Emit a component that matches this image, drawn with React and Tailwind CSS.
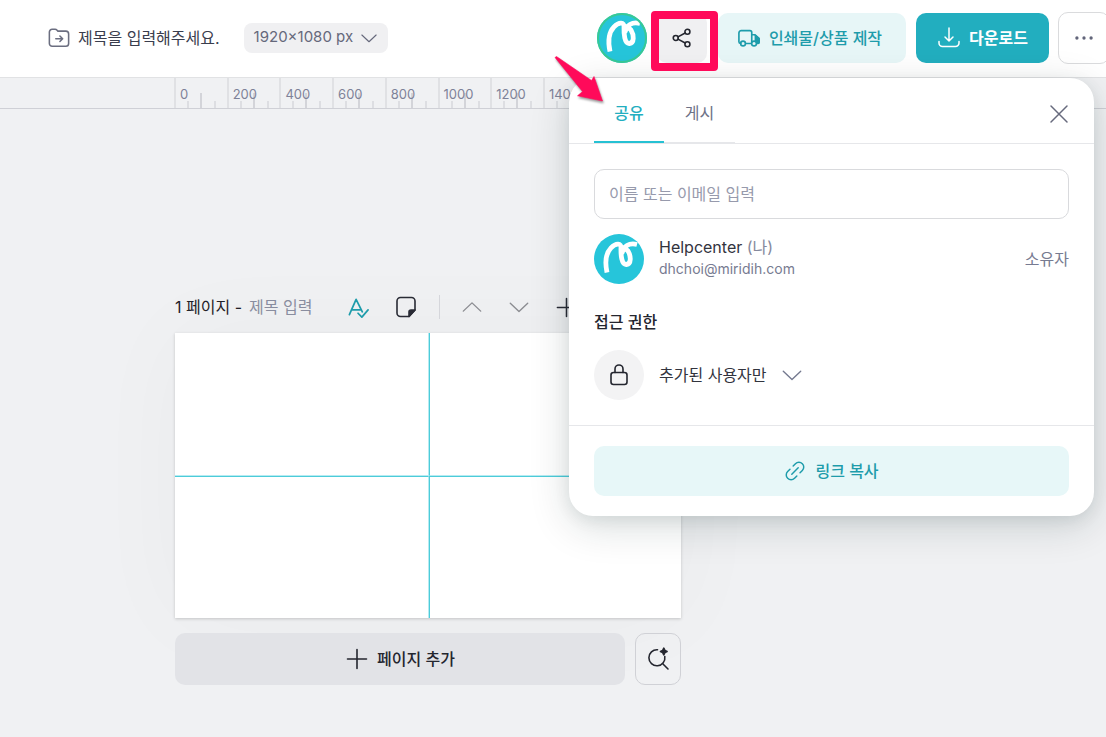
import React from "react";

const RULER = [0, 200, 400, 600, 800, 1000, 1200, 1400, 1600, 1800];

const line = {
  fill: "none",
  stroke: "currentColor",
  strokeWidth: 1.5,
  strokeLinecap: "round",
  strokeLinejoin: "round",
};

function Svg({ className, children, ...rest }) {
  return (
    <svg viewBox="0 0 24 24" aria-hidden="true" className={className} {...line} {...rest}>
      {children}
    </svg>
  );
}

function Squiggle({ className }) {
  return (
    <svg viewBox="0 0 50 50" aria-hidden="true" className={className}>
      <circle cx="25" cy="25" r="25" fill="#26c5da" />
      <path
        d="M13 38.500C11 29 11.500 19.500 17 13.800C22 8.500 27.500 9 27 14C26.800 21 27.500 31 32.500 30.500C37.500 30 37 22 34 17C31.800 14 29.300 15 28.200 18.500C29 12.500 35 8.500 43 10.500"
        fill="none"
        stroke="#fff"
        strokeWidth="4.800"
        strokeLinejoin="round"
      />
    </svg>
  );
}

function Chevron({ className, up }) {
  return (
    <Svg className={className} strokeWidth="1.500">
      <path d={up ? "M2.500 16.500 12 7.500l9.500 9" : "M2.500 8l9.500 9 9.500-9"} />
    </Svg>
  );
}

function Header() {
  return (
    <header className="flex h-[78px] items-center border-b border-[#e1e2e4] bg-white pb-0.5 pl-12">
      <div className="flex shrink-0 items-center">
        <Svg className="mr-2 size-[22px] text-[#6b6e80]" strokeWidth="1.700">
          <path d="M1.500 5.500a3 3 0 0 1 3-3h3.200a3 3 0 0 1 2.200 1l.9 1h8.700a3 3 0 0 1 3 3v10.500a3 3 0 0 1-3 3h-15a3 3 0 0 1-3-3zM8.500 12.800h7.500m-3-3 3 3-3 3" />
        </Svg>
        <span className="text-[16px] text-[#3a3d4d]">제목을 입력해주세요.</span>
        <button className="ml-6 flex h-[30px] items-center gap-[7px] rounded-lg bg-[#f0f0f2] px-[10px] text-[15px] text-[#65687b]">
          1920×1080 px
          <Chevron className="size-[18px]" />
        </button>
      </div>
      <div className="-mr-1 ml-auto flex shrink-0 items-center">
        <span className="relative mr-[10px] size-[50px] rounded-full">
          <Squiggle className="size-[50px]" />
          <span className="absolute inset-0 rounded-full border-2 border-[#38c995]" />
        </span>
        <div className="relative mr-[11px]">
          <button aria-label="공유" className="flex size-[50px] items-center justify-center rounded-[10px] bg-[#f0f0f2] text-[#24262f]">
            <Svg className="size-5" strokeWidth="1.900">
              <circle cx="4.500" cy="12" r="3" />
              <circle cx="18.500" cy="4.500" r="3" />
              <circle cx="18.500" cy="19.500" r="3" />
              <path d="M7.200 10.700 15.800 6M7.200 13.300l8.600 4.700" />
            </Svg>
          </button>
          <span className="pointer-events-none absolute -top-0.5 -right-[11px] -bottom-2 -left-1.5 z-10 rounded-[4px] border-8 border-[#ff0a5a]" />
        </div>
        <button className="mr-[10px] flex h-[50px] items-center gap-[9px] rounded-[10px] bg-[#e7f6f7] pr-6 pl-5 text-[16px] font-medium text-[#1e9cab]">
          <Svg className="size-[22px]" strokeWidth="1.800">
            <path d="M3 18H2.800A2 2 0 0 1 1 16V6.500A2.500 2.500 0 0 1 3.500 4H13a2 2 0 0 1 2 2v12H8.500M15 8.500h3.500l4.500 4v4a1.500 1.500 0 0 1-1.500 1.500H21" />
            <path d="M19 9l4 4v4h-3l-1-2z" fill="currentColor" />
            <circle cx="5.500" cy="18" r="2.600" />
            <circle cx="17.500" cy="18" r="2.600" fill="#e7f6f7" />
          </Svg>
          인쇄물/상품 제작
        </button>
        <button className="mr-[9px] flex h-[50px] items-center gap-2 rounded-[10px] bg-[#22aebf] px-[21px] text-[16px] font-bold text-white">
          <Svg className="size-6">
            <path d="M12 2v13m-4-4 4 4 4-4M2 15.500V17a3.500 3.500 0 0 0 3.500 3.500h13A3.500 3.500 0 0 0 22 17v-1.500" />
          </Svg>
          다운로드
        </button>
        <button aria-label="더보기" className="flex size-[52px] items-center justify-center rounded-[10px] border border-[#dadbdd] bg-white text-[#62657a]">
          <Svg className="size-5" fill="currentColor" stroke="none">
            <circle cx="3.500" cy="12" r="2" />
            <circle cx="12" cy="12" r="2" />
            <circle cx="20.500" cy="12" r="2" />
          </Svg>
        </button>
      </div>
    </header>
  );
}

function Ruler() {
  return (
    <div className="h-[31px] overflow-hidden border-b border-[#cfd0d6] pl-[174px]">
      <div className="grid h-full w-[527px] grid-cols-10">
        {RULER.map((n) => (
          <div key={n} className="relative border-l-2 border-[#e0e1e4] pt-2 pl-1 text-[13px] leading-4 text-[#7e8298]">
            <span className="absolute bottom-0 left-[11px] h-[7px] w-0.5 bg-[#dddee2]" />
            <span className="absolute bottom-0 left-[24px] h-[15px] w-0.5 bg-[#d3d4d9]" />
            <span className="absolute bottom-0 left-[38px] h-[7px] w-0.5 bg-[#dddee2]" />
            <span className="relative">{n}</span>
          </div>
        ))}
      </div>
    </div>
  );
}

function PageBar() {
  return (
    <div className="flex h-7 items-center text-[16px]">
      <span className="text-[#1f2128]">1 페이지 -</span>
      <input
        aria-label="페이지 제목"
        placeholder="제목 입력"
        className="ml-[7px] w-[98px] bg-transparent outline-none placeholder:text-[#898d9f]"
      />
      <button aria-label="맞춤법 검사" className="text-[#1e9cab]">
        <Svg className="size-[23px]" strokeWidth="1.800">
          <path d="M2.500 19.500 9.500 3.500l6.500 13M5.500 14.500h8.500M11.500 18l4 4L22 14.500" />
        </Svg>
      </button>
      <button aria-label="메모" className="ml-6 text-[#292b35]">
        <Svg className="size-6" strokeWidth="1.600">
          <path d="M21 15V6a3.500 3.500 0 0 0-3.500-3.500h-11A3.500 3.500 0 0 0 3 6v12a3.500 3.500 0 0 0 3.500 3.500H15z" />
          <path d="M15 21.500V17a2 2 0 0 1 2-2h4z" fill="currentColor" />
        </Svg>
      </button>
      <span className="mx-[21px] h-6 w-px bg-[#d5d6db]" />
      <button aria-label="위로" className="text-[#8b8c91]"><Chevron up className="size-[22px]" /></button>
      <button aria-label="아래로" className="ml-[25px] text-[#8b8c91]"><Chevron className="size-[22px]" /></button>
      <button aria-label="추가" className="ml-[25px] text-[#292b35]">
        <Svg className="size-[23px]" strokeWidth="1.600"><path d="M12 2.500v19M2.500 12h19" /></Svg>
      </button>
    </div>
  );
}

function Workspace() {
  return (
    <main className="pt-[184px] pl-[175px]">
      <div className="w-[506px]">
        <PageBar />
        <div className="mt-3 grid aspect-[506/285] grid-cols-[254px_1fr] grid-rows-[143px_1fr] bg-white shadow-[0_1px_3px_rgba(0,0,0,0.18),0_0_100px_rgba(0,0,0,0.03)]">
          <div className="border-r border-b border-[#b5ebf2]" />
          <div className="border-b border-l border-b-[#b5ebf2] border-l-[#4dccd9]" />
          <div className="border-t border-r border-t-[#4dccd9] border-r-[#b5ebf2]" />
          <div className="border-t border-l border-[#4dccd9]" />
        </div>
        <div className="mt-[15px] flex gap-[10px]">
          <button className="flex h-[52px] flex-1 items-center justify-center gap-2 rounded-[10px] bg-[#e2e3e7] text-[16px] font-medium text-[#24262f]">
            <Svg className="size-6" strokeWidth="1.600"><path d="M12 2.500v19M2.500 12h19" /></Svg>
            페이지 추가
          </button>
          <button aria-label="확대" className="flex h-[52px] w-[46px] items-center justify-center rounded-[10px] border border-[#d0d1d6] text-[#24262f]">
            <Svg className="size-6" strokeWidth="1.600">
              <path d="M11.500 2.800A8 8 0 1 0 18.800 9.500M16.500 16.500l5.500 5.500" />
              <path d="M17.800 1.200 18.900 3.400l2.200 1.100-2.200 1.100-1.100 2.200-1.100-2.200-2.200-1.100 2.200-1.100z" fill="currentColor" />
            </Svg>
          </button>
        </div>
      </div>
    </main>
  );
}

function SharePanel() {
  return (
    <section className="absolute top-[78px] right-3 w-[525px] rounded-[24px] bg-white shadow-[0_10px_40px_rgba(0,40,40,0.16),0_4px_16px_rgba(0,40,40,0.08)]">
      <svg viewBox="0 0 60 60" aria-hidden="true" className="pointer-events-none absolute -top-[26px] -left-5 size-[60px] drop-shadow-[1px_2px_1px_rgba(0,0,0,0.4)]">
        <path d="M6 5.500 7.500 4.500 42.500 28.500 45 24.500 53.500 49 28.500 43.800 33.500 39.500z" fill="#ff0a5a" stroke="#ff0a5a" strokeWidth="0.600" strokeLinejoin="round" />
      </svg>
      <div className="flex h-[66px] items-end border-b border-[#e6e7ea] px-[25px] text-[16px]">
        <div role="tablist" className="flex">
          <button role="tab" aria-selected="true" className="h-[59px] w-[70px] border-b-2 border-[#26c1d3] font-medium text-[#22aebf]">공유</button>
          <button role="tab" aria-selected="false" className="h-[59px] w-[71px] border-b border-[#e6e7ea] text-[#6e7187]">게시</button>
        </div>
        <button aria-label="닫기" className="-mr-0.5 mb-[17px] ml-auto text-[#676a7d]">
          <Svg className="size-6"><path d="M4 4l16 16M20 4 4 20" /></Svg>
        </button>
      </div>
      <div className="p-[25px]">
        <input
          aria-label="이름 또는 이메일"
          placeholder="이름 또는 이메일 입력"
          className="h-[50px] w-full rounded-[10px] border border-[#d9dadd] px-[14px] text-[16px] outline-none placeholder:text-[#979aac]"
        />
        <div className="mt-[15px] flex items-center">
          <Squiggle className="mr-[15px] size-[50px]" />
          <div className="pb-1">
            <p className="text-[16px] leading-6 text-[#32343e]">Helpcenter <span className="text-[#85899d]">(나)</span></p>
            <p className="text-[14px] leading-5 text-[#777b91]">dhchoi@miridih.com</p>
          </div>
          <span className="ml-auto text-[16px] text-[#777b91]">소유자</span>
        </div>
        <h2 className="mt-[26px] text-[16px] leading-6 font-medium text-[#24262f]">접근 권한</h2>
        <div className="mt-4 flex items-center">
          <span className="mr-[15px] flex size-[50px] items-center justify-center rounded-full bg-[#f3f3f4] text-[#24262f]">
            <Svg className="size-6" strokeWidth="1.600">
              <rect x="4" y="9.500" width="16" height="12" rx="2.500" />
              <path d="M8 9.500V6a4 4 0 0 1 8 0v3.500" />
            </Svg>
          </span>
          <button className="flex items-center gap-[14px] text-[16px] text-[#32343e]">
            추가된 사용자만
            <Chevron className="size-[22px] text-[#74798f]" />
          </button>
        </div>
      </div>
      <div className="border-t border-[#e6e7ea] px-[25px] py-5">
        <button className="flex h-[50px] w-full items-center justify-center gap-[9px] rounded-[10px] bg-[#e7f7f8] text-[16px] font-medium text-[#1e9cab]">
          <Svg className="size-[22px]" strokeWidth="1.600">
            <path d="M8.500 15.500l7-7M10 6.500l2.500-2.500a5.300 5.300 0 0 1 7.500 7.500L17.500 14M14 17.500 11.500 20A5.300 5.300 0 0 1 4 12.500L6.500 10" />
          </Svg>
          링크 복사
        </button>
      </div>
    </section>
  );
}

export default function App() {
  return (
    <div className="relative min-h-screen overflow-hidden bg-[#f0f1f3] font-[Inter,'Noto_Sans_CJK_KR',sans-serif]">
      <Header />
      <Ruler />
      <Workspace />
      <SharePanel />
    </div>
  );
}
